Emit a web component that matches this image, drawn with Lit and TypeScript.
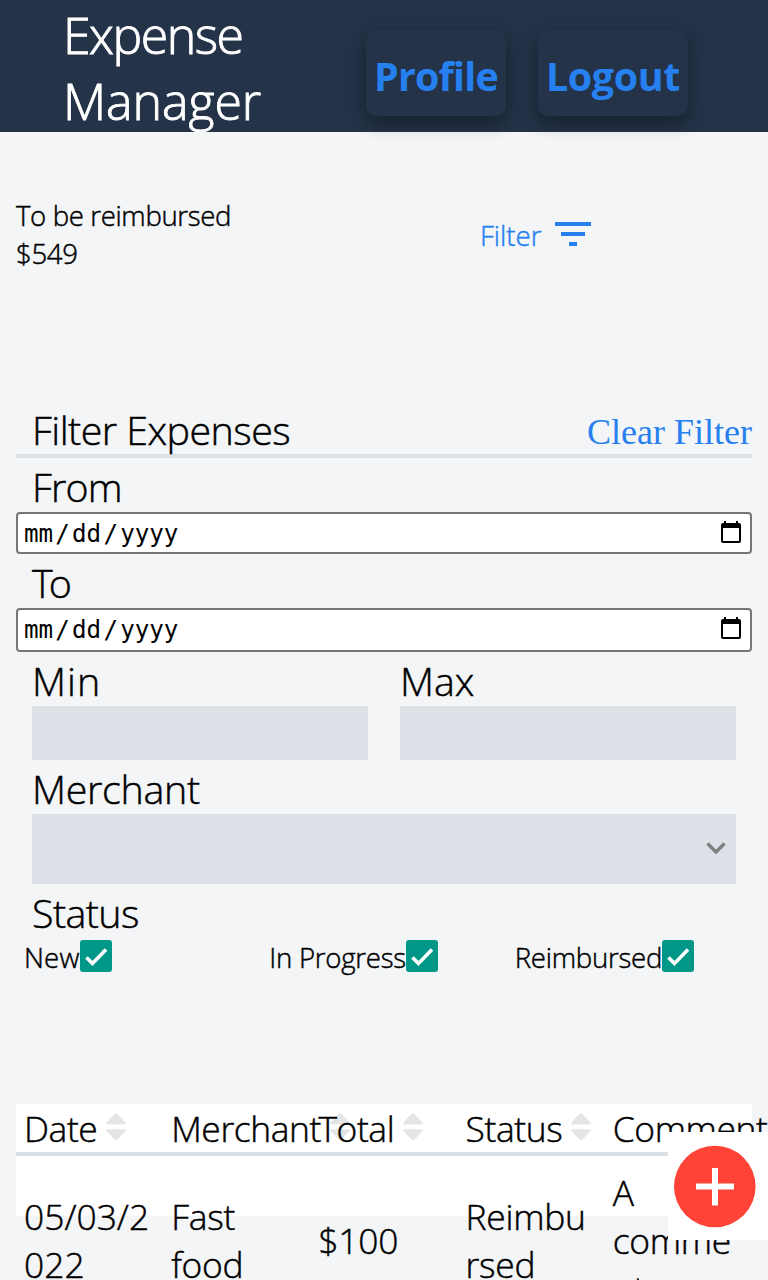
import { LitElement, html, css } from "lit";
import { customElement } from "lit/decorators.js";

const COLUMNS = ["Date", "Merchant", "Total", "Status", "Comment"];
const EXPENSE = ["05/03/2022", "Fast food", "$100", "Reimbursed", "A comment"];
const STATUSES = ["New", "In Progress", "Reimbursed"];

const sortIcon = html`<svg class="sort" viewBox="0 0 22 30" aria-hidden="true">
  <path d="M10 .6Q11 0 12 .6L21 10Q21.6 11.7 20 11.8H2Q.4 11.7 1 10Z"/><path d="M10 28Q11 28.6 12 28L21 18.600Q21.600 16.900 20 16.800H2Q.4 16.900 1 18.600Z"/>
</svg>`;

const calendarIcon = html`<svg class="calendar" viewBox="0 0 20 22" aria-hidden="true">
  <path fill-rule="evenodd" d="M3 0h2v2h10V0h2v2h1a2 2 0 0 1 2 2v16a2 2 0 0 1-2 2H2a2 2 0 0 1-2-2V4a2 2 0 0 1 2-2h1zM2 7v13h16V7z"/>
</svg>`;

@customElement("app-root")
export class AppRoot extends LitElement {
  static styles = css`
    :host {
      display: block;
      position: relative;
      width: 768px;
      height: 1280px;
      overflow: hidden;
      background: #f3f5f7;
      color: #000;
      font-family: "Open Sans", "Noto Sans", sans-serif;
      font-weight: 300;
      font-size: 27.6px;
      -webkit-text-stroke: 0.45px currentColor;
    }
    * { box-sizing: border-box; }
    .header {
      display: flex;
      align-items: flex-start;
      height: 132px;
      background: #243348;
      padding-left: 63px;
    }
    .brand {
      width: 303px;
      padding-top: 2px;
      color: #fff;
      font-size: 50px;
      line-height: 66px;
      letter-spacing: -0.05px;
      -webkit-text-stroke: 0.9px currentColor;
    }
    .brand span { display: block; }
    .brand .first { letter-spacing: -1.5px; }
    .nav {
      height: 86px;
      margin: 30px 32px 0 0;
      padding: 2px 0 0 8px;
      border: 0;
      border-radius: 10px;
      background: #243348;
      box-shadow: 0 8px 16px rgba(0, 0, 0, 0.2), 0 6px 20px rgba(0, 0, 0, 0.19);
      color: #2680f0;
      font: 700 39.4px/89.4px "Open Sans", sans-serif;
      letter-spacing: -0.8px;
      text-align: left;
      white-space: nowrap;
      -webkit-text-stroke: 0;
    }
    .profile { width: 140px; }
    .logout { width: 150px; letter-spacing: -0.4px; }
    .summary {
      display: flex;
      height: 273px;
      padding: 64px 16px 0;
      line-height: 38px;
      letter-spacing: -0.37px;
    }
    .total { width: 464px; }
    .toggle {
      display: flex;
      align-items: flex-start;
      height: 38px;
      margin-top: 20px;
      color: #2680f0;
      letter-spacing: 0;
    }
    .toggle svg { width: 36px; height: 24px; margin: 6px 0 0 14px; fill: currentColor; }
    .section-title {
      display: flex;
      justify-content: space-between;
      height: 53px;
      margin: 0 16px;
      padding-left: 16px;
      border-bottom: 4px solid #dce1e8;
      font-size: 39.4px;
      line-height: 50px;
      letter-spacing: -0.53px;
    }
    .clear {
      color: #2680f0;
      font: 400 36px/55px "Liberation Serif", serif;
      letter-spacing: 0;
      -webkit-text-stroke: 0;
    }
    .label {
      height: 54px;
      padding-left: 32px;
      font-size: 39.4px;
      line-height: 59.4px;
      letter-spacing: -0.83px;
    }
    .label.to { letter-spacing: -3.8px; }
    .label.min { letter-spacing: 1px; }
    .label.max { letter-spacing: 0; }
    .label.merchant { letter-spacing: -0.3px; }
    .label.state { letter-spacing: -0.6px; }
    .date {
      display: flex;
      justify-content: space-between;
      height: 42px;
      margin: 0 16px;
      padding: 0 9px 0 6px;
      border: 2px solid #767676;
      border-radius: 4px;
      background: #fff;
      font: 400 24.2px/40px "DejaVu Sans Mono", monospace;
      -webkit-text-stroke: 0;
    }
    .date.tall { height: 44px; }
    .date i { font-style: normal; padding: 0 2.2px; }
    .calendar { width: 20px; height: 22px; margin-top: 7px; }
    .pair { display: grid; grid-template-columns: 1fr 1fr; }
    .field { height: 54px; margin: 0 32px; background: #dce1e8; }
    .pair .field { margin: 0 16px 0 32px; }
    .pair > :last-child .field { margin: 0 32px 0 16px; }
    .pair > :last-child .label { padding-left: 16px; }
    .select {
      display: flex;
      justify-content: flex-end;
      align-items: center;
      height: 70px;
      padding: 0 10px 2px 0;
    }
    .select svg { width: 20px; height: 12px; fill: none; stroke: #808080; stroke-width: 3.4; }
    .statuses {
      display: grid;
      grid-template-columns: repeat(3, 1fr);
      height: 164px;
      margin: 2px 16px 0;
      line-height: 35px;
      letter-spacing: -0.26px;
    }
    .status { display: flex; padding-left: 8px; align-items: flex-start; }
    .status:first-child { letter-spacing: 0.2px; }
    .check { width: 32px; height: 32px; border-radius: 3px; background: #009688; }
    .check svg { display: block; width: 32px; height: 32px; fill: none; stroke: #fff; stroke-width: 3.6; }
    .table {
      height: 112px;
      margin: 0 16px;
      background: #fff;
      font-size: 35.4px;
      line-height: 48px;
      letter-spacing: -0.4px;
    }
    .row { display: grid; grid-template-columns: repeat(5, 147.2px); }
    .head { height: 52px; border-bottom: 4px solid #dce1e6; }
    .cell { display: flex; padding-left: 8px; white-space: nowrap; }
    .sort { flex: none; width: 22px; height: 29px; margin: 9px 0 0 8px; fill: #e5e5e5; }
    .body { height: 168px; align-items: center; letter-spacing: -0.25px; }
    .value { padding: 0 14px 0 8px; overflow-wrap: anywhere; }
    .value:first-child { padding-right: 8px; letter-spacing: 0; }
    .fab {
      position: absolute;
      left: 668px;
      top: 1132px;
      width: 100px;
      height: 108px;
      background: #fff;
    }
    .fab svg { display: block; width: 100px; height: 108px; }
  `;

  private dateField(tall = false) {
    return html`<div class="date ${tall ? "tall" : ""}">
      <span>mm<i>/</i>dd<i>/</i>yyyy</span>${calendarIcon}
    </div>`;
  }

  render() {
    return html`
      <header class="header">
        <div class="brand"><span class="first">Expense</span><span>Manager</span></div>
        <button class="nav profile">Profile</button>
        <button class="nav logout">Logout</button>
      </header>

      <section class="summary">
        <div class="total">To be reimbursed<br />$549</div>
        <div class="toggle">
          <span>Filter</span>
          <svg viewBox="0 0 36 24"><path d="M0 0h36v4H0zM6 10h24v4H6zM14 20h8v4h-8z" /></svg>
        </div>
      </section>

      <div class="section-title"><span>Filter Expenses</span><a class="clear">Clear Filter</a></div>
      <div class="label">From</div>
      ${this.dateField()}
      <div class="label to">To</div>
      ${this.dateField(true)}
      <div class="pair">
        <div><div class="label min">Min</div><div class="field"></div></div>
        <div><div class="label max">Max</div><div class="field"></div></div>
      </div>
      <div class="label merchant">Merchant</div>
      <div class="field select">
        <svg viewBox="0 0 20 12"><path d="M1.500 1.500 10 10l8.500-8.500" /></svg>
      </div>
      <div class="label state">Status</div>
      <div class="statuses">
        ${STATUSES.map(
          (name) => html`<label class="status">
            <span>${name}</span>
            <span class="check"><svg viewBox="0 0 32 32"><path d="M6.500 17.500l6 6L26 9.500" /></svg></span>
          </label>`
        )}
      </div>

      <div class="table">
        <div class="row head">
          ${COLUMNS.map((name) => html`<div class="cell"><span>${name}</span>${sortIcon}</div>`)}
        </div>
        <div class="row body">
          ${EXPENSE.map((value) => html`<div class="value">${value}</div>`)}
        </div>
      </div>

      <div class="fab">
        <svg viewBox="0 0 100 108">
          <circle cx="46.800" cy="54.500" r="40.800" fill="#ff4336" />
          <path d="M28 54.500h38M47 36v37.500" stroke="#fff" stroke-width="6" />
        </svg>
      </div>
    `;
  }
}
